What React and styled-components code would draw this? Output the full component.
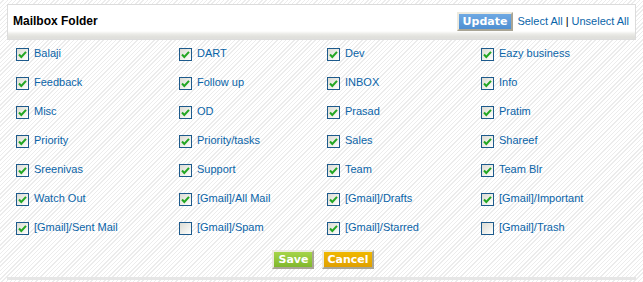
import React, { useState } from "react";
import styled, { createGlobalStyle } from "styled-components";

const Global = createGlobalStyle`
  html, body { margin: 0; padding: 0; }
  body {
    font-family: "Liberation Sans", Arial, sans-serif;
    background: repeating-linear-gradient(135deg, #ffffff 0 2px, #ececec 2px 3px);
    min-height: 282px;
  }
`;

const Page = styled.div`
  width: 629px;
  padding: 4px 7px 0 7px;
`;

const Header = styled.div`
  height: 32px;
  border: 1px solid #dcdcdc;
  background: linear-gradient(to bottom, #ffffff 0, #ffffff 26px, #ebebe7 29px, #e0e0dc 32px);
  display: flex;
  align-items: center;
  padding: 0 6px 2px 5px;
`;

const Title = styled.div`
  font-weight: bold;
  font-size: 12px;
  color: #000;
  flex: 1;
`;

const Actions = styled.div`
  display: flex;
  align-items: center;
  font-size: 11px;
  color: #000;
`;

const Link = styled.a`
  color: #0a64a8;
  text-decoration: none;
  cursor: pointer;
`;

const Sep = styled.span`
  margin: 0 3px;
`;

const Btn = styled.button`
  font-family: "DejaVu Sans", Verdana, sans-serif;
  font-weight: bold;
  font-size: 11px;
  color: #fff;
  height: 19px;
  padding: 0 ${(p) => p.$px || 6}px;
  margin-right: ${(p) => p.$mr || 0}px;
  border: 2px solid;
  border-color: #eceadf #a9a595 #a9a595 #eceadf;
  background: ${(p) => p.$bg};
  cursor: pointer;
  line-height: 15px;
`;

const Grid = styled.div`
  display: grid;
  grid-template-columns: 163px 148px 154px 1fr;
  grid-auto-rows: 29px;
  padding-left: 9px;
`;

const Item = styled.label`
  display: flex;
  align-items: center;
  gap: 5px;
  font-size: 11px;
  color: #0a64a8;
  cursor: pointer;
  padding-bottom: 3px;
`;

const Box = styled.span`
  width: 11px;
  height: 11px;
  border: 1px solid #1d5a8c;
  background: linear-gradient(135deg, #dcdcd4 0%, #f4f4f0 70%, #ffffff 100%);
  display: inline-flex;
  align-items: center;
  justify-content: center;
  margin-top: 2px;
  flex: none;
`;

const Footer = styled.div`
  display: flex;
  justify-content: center;
  gap: 8px;
  padding-top: 7px;
  padding-left: 3px;
`;

const Bar = styled.div`
  height: 3px;
  background: #e6e6e6;
  margin-top: 8px;
`;

const Check = () => (
  <svg width="9" height="9" viewBox="0 0 9 9">
    <path d="M1 4.5 L3.3 7 L8 1.8" fill="none" stroke="#23a623" strokeWidth="2" />
  </svg>
);

const folders = [
  ["Balaji", true], ["DART", true], ["Dev", true], ["Eazy business", true],
  ["Feedback", true], ["Follow up", true], ["INBOX", true], ["Info", true],
  ["Misc", true], ["OD", true], ["Prasad", true], ["Pratim", true],
  ["Priority", true], ["Priority/tasks", true], ["Sales", true], ["Shareef", true],
  ["Sreenivas", true], ["Support", true], ["Team", true], ["Team Blr", true],
  ["Watch Out", true], ["[Gmail]/All Mail", true], ["[Gmail]/Drafts", true], ["[Gmail]/Important", true],
  ["[Gmail]/Sent Mail", true], ["[Gmail]/Spam", false], ["[Gmail]/Starred", true], ["[Gmail]/Trash", false],
];

export default function App() {
  const [state, setState] = useState(folders.map((f) => f[1]));
  const toggle = (i) => setState((s) => s.map((v, j) => (j === i ? !v : v)));
  return (
    <Page>
      <Global />
      <Header>
        <Title>Mailbox Folder</Title>
        <Actions>
          <Btn $bg="linear-gradient(to bottom, #6fa9e3, #4f8fd2)" $px={4} $mr={4}>Update</Btn>
          <Link onClick={() => setState(state.map(() => true))}>Select All</Link>
          <Sep>|</Sep>
          <Link onClick={() => setState(state.map(() => false))}>Unselect All</Link>
        </Actions>
      </Header>
      <Grid>
        {folders.map(([name], i) => (
          <Item key={name} onClick={() => toggle(i)}>
            <Box>{state[i] && <Check />}</Box>
            {name}
          </Item>
        ))}
      </Grid>
      <Footer>
        <Btn $bg="linear-gradient(to bottom, #a6d448, #80b82c)" $px={4}>Save</Btn>
        <Btn $bg="linear-gradient(to bottom, #f0b800, #e0a000)" $px={3}>Cancel</Btn>
      </Footer>
      <Bar />
    </Page>
  );
}
